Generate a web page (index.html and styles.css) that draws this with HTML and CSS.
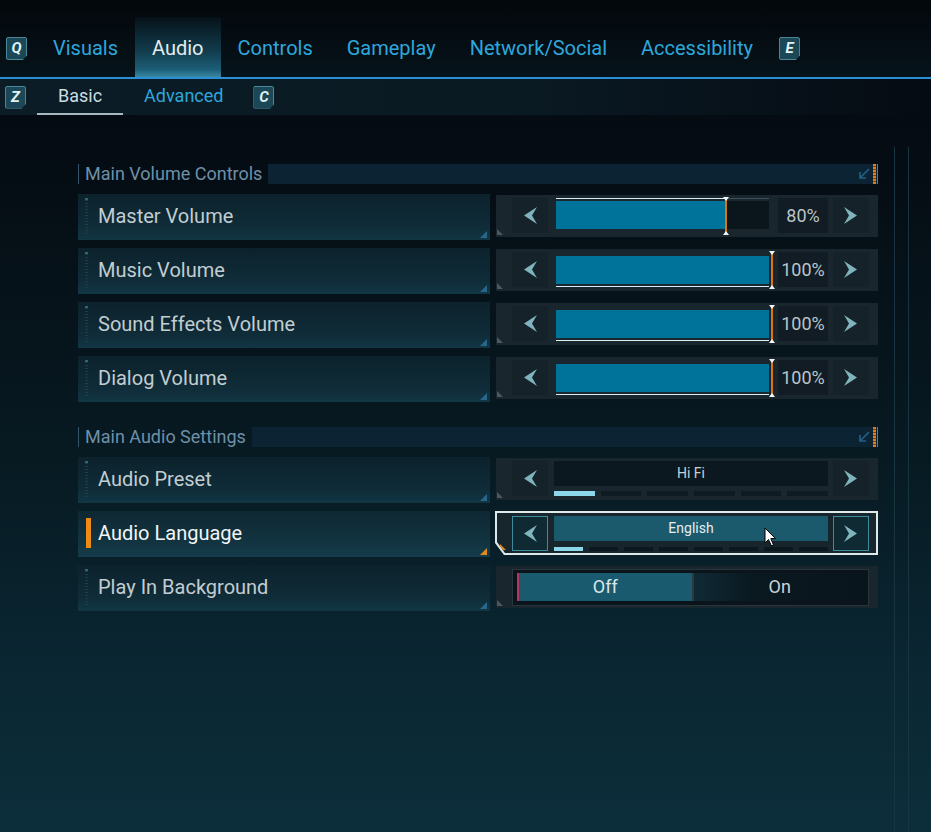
FILE: index.html
```html
<!DOCTYPE html>
<html lang="en">
  <head>
    <meta charset="UTF-8" />
    <title>Settings - Audio</title>
    <link rel="stylesheet" href="styles.css">
  </head>
  <body>
    <nav class="tabs">
      <span class="key key-left">Q</span>
      <a class="tab">Visuals</a>
      <a class="tab active">Audio</a>
      <a class="tab">Controls</a>
      <a class="tab">Gameplay</a>
      <a class="tab">Network/Social</a>
      <a class="tab">Accessibility</a>
      <span class="key key-right">E</span>
    </nav>

    <nav class="subtabs">
      <span class="key key-left">Z</span>
      <a class="subtab active">Basic</a>
      <a class="subtab">Advanced</a>
      <span class="key key-right">C</span>
    </nav>

    <main class="content">
      <div class="settings">
        <!-- Volume -->
        <section class="group">
          <div class="group-head">
            <span class="group-title">Main Volume Controls</span>
            <div class="group-bar">
              <svg class="collapse" width="12" height="12" viewBox="0 0 12 12"><path d="M11 1 L2 10 M2 4 L2 10 L8 10" fill="none" stroke="#2a6f9c" stroke-width="1.6"/></svg>
              <span class="stripe"></span>
              <span class="edge"></span>
            </div>
          </div>
          <div class="rows">
            <div class="row">
              <div class="label">Master Volume</div>
              <div class="control">
                <div class="control-body">
                  <button class="arrow"><svg width="14" height="17" viewBox="0 0 14 17"><polygon points="14,0 1,8.5 14,17 9,8.5"/></svg></button>
                  <div class="slider" style="--v:80%">
                    <div class="rail"></div>
                    <div class="track"><div class="fill"></div></div>
                    <span class="thumb"></span>
                  </div>
                  <div class="value">80%</div>
                  <button class="arrow"><svg width="14" height="17" viewBox="0 0 14 17"><polygon points="0,0 13,8.5 0,17 5,8.5"/></svg></button>
                </div>
              </div>
            </div>
            <div class="row">
              <div class="label">Music Volume</div>
              <div class="control">
                <div class="control-body">
                  <button class="arrow"><svg width="14" height="17" viewBox="0 0 14 17"><polygon points="14,0 1,8.5 14,17 9,8.5"/></svg></button>
                  <div class="slider full" style="--v:100%">
                    <div class="track"><div class="fill"></div></div>
                    <div class="rail"></div>
                    <span class="thumb"></span>
                  </div>
                  <div class="value">100%</div>
                  <button class="arrow"><svg width="14" height="17" viewBox="0 0 14 17"><polygon points="0,0 13,8.5 0,17 5,8.5"/></svg></button>
                </div>
              </div>
            </div>
            <div class="row">
              <div class="label">Sound Effects Volume</div>
              <div class="control">
                <div class="control-body">
                  <button class="arrow"><svg width="14" height="17" viewBox="0 0 14 17"><polygon points="14,0 1,8.5 14,17 9,8.5"/></svg></button>
                  <div class="slider full" style="--v:100%">
                    <div class="track"><div class="fill"></div></div>
                    <div class="rail"></div>
                    <span class="thumb"></span>
                  </div>
                  <div class="value">100%</div>
                  <button class="arrow"><svg width="14" height="17" viewBox="0 0 14 17"><polygon points="0,0 13,8.5 0,17 5,8.5"/></svg></button>
                </div>
              </div>
            </div>
            <div class="row">
              <div class="label">Dialog Volume</div>
              <div class="control">
                <div class="control-body">
                  <button class="arrow"><svg width="14" height="17" viewBox="0 0 14 17"><polygon points="14,0 1,8.5 14,17 9,8.5"/></svg></button>
                  <div class="slider full" style="--v:100%">
                    <div class="track"><div class="fill"></div></div>
                    <div class="rail"></div>
                    <span class="thumb"></span>
                  </div>
                  <div class="value">100%</div>
                  <button class="arrow"><svg width="14" height="17" viewBox="0 0 14 17"><polygon points="0,0 13,8.5 0,17 5,8.5"/></svg></button>
                </div>
              </div>
            </div>
          </div>
        </section>

        <!-- Audio settings -->
        <section class="group">
          <div class="group-head">
            <span class="group-title">Main Audio Settings</span>
            <div class="group-bar">
              <svg class="collapse" width="12" height="12" viewBox="0 0 12 12"><path d="M11 1 L2 10 M2 4 L2 10 L8 10" fill="none" stroke="#2a6f9c" stroke-width="1.6"/></svg>
              <span class="stripe"></span>
              <span class="edge"></span>
            </div>
          </div>
          <div class="rows">
            <div class="row">
              <div class="label">Audio Preset</div>
              <div class="control">
                <div class="control-body">
                  <button class="arrow"><svg width="14" height="17" viewBox="0 0 14 17"><polygon points="14,0 1,8.5 14,17 9,8.5"/></svg></button>
                  <div class="picker">
                    <div class="picker-value">Hi Fi</div>
                    <div class="steps">
                      <span class="on"></span><span></span><span></span><span></span><span></span><span></span>
                    </div>
                  </div>
                  <button class="arrow"><svg width="14" height="17" viewBox="0 0 14 17"><polygon points="0,0 13,8.5 0,17 5,8.5"/></svg></button>
                </div>
              </div>
            </div>
            <div class="row">
              <div class="label active">Audio Language</div>
              <div class="control focused">
                <div class="control-body">
                  <button class="arrow"><svg width="14" height="17" viewBox="0 0 14 17"><polygon points="14,0 1,8.5 14,17 9,8.5"/></svg></button>
                  <div class="picker">
                    <div class="picker-value">English</div>
                    <div class="steps">
                      <span class="on"></span><span></span><span></span><span></span><span></span><span></span><span></span><span></span>
                    </div>
                  </div>
                  <button class="arrow"><svg width="14" height="17" viewBox="0 0 14 17"><polygon points="0,0 13,8.5 0,17 5,8.5"/></svg></button>
                </div>
              </div>
            </div>
            <div class="row">
              <div class="label">Play In Background</div>
              <div class="control">
                <div class="control-body">
                  <div class="toggle">
                    <span class="opt on">Off</span>
                    <span class="opt">On</span>
                  </div>
                </div>
              </div>
            </div>
          </div>
        </section>
      </div>

      <div class="scroll"></div>
    </main>

    <svg class="cursor" width="13" height="20" viewBox="0 0 13 20"><path d="M1 1 L1 16 L4.5 12.5 L7.5 19 L9.5 18 L6.8 11.6 L11.5 11.6 Z" fill="#fff" stroke="#000" stroke-width="1"/></svg>
  </body>
</html>
```

FILE: styles.css
```css
* {
  margin: 0;
  padding: 0;
  box-sizing: border-box;
}

body {
  width: 931px;
  height: 832px;
  overflow: hidden;
  position: relative;
  font-family: Roboto, "Liberation Sans", sans-serif;
  color: #c7d2d6;
  background: linear-gradient(180deg, #04090f 0px, #050c13 150px, #071921 440px, #0a2733 680px, #0c2e3a 832px);
}

/* top tabs */
.tabs {
  height: 79px;
  display: flex;
  align-items: flex-end;
  padding-left: 6px;
  background: linear-gradient(180deg, #03070b 0%, #06131a 100%);
  border-bottom: 2px solid #2b8fd6;
}

.tab {
  height: 60px;
  line-height: 62px;
  padding: 0 17px;
  font-size: 20px;
  color: #2ea7dc;
}

.tab.active {
  color: #e4ecee;
  background: linear-gradient(180deg, rgba(12, 34, 44, 0.3) 0%, #113a4a 55%, #1c5f78 88%, #3a88a2 100%);
}

.key {
  width: 21px;
  height: 23px;
  line-height: 21px;
  text-align: center;
  font-size: 15px;
  font-weight: bold;
  font-style: italic;
  color: #dff3f7;
  background: #1b4756;
  border: 1px solid #4a8898;
  border-radius: 2px;
  clip-path: polygon(0 0, 100% 0, 100% 80%, 80% 100%, 0 100%);
}

.tabs .key {
  margin-bottom: 17px;
}

.tabs .key-left {
  margin-right: 9px;
}

.tabs .key-right {
  margin-left: 9px;
}

/* sub tabs */
.subtabs {
  height: 36px;
  display: flex;
  align-items: center;
  padding-left: 5px;
  background: linear-gradient(90deg, #0b1c26 0%, #0a1a23 55%, #050b13 100%);
}

.subtab {
  height: 36px;
  line-height: 34px;
  padding: 0 21px;
  font-size: 18px;
  color: #2ea7dc;
}

.subtab.active {
  color: #c9dde2;
  border-bottom: 2px solid #a9b8bf;
}

.subtabs .key-left {
  margin-right: 11px;
}

.subtabs .key-right {
  margin-left: 9px;
}

/* content */
.content {
  display: flex;
  padding-top: 49px;
}

.settings {
  margin-left: 78px;
  width: 800px;
}

.scroll {
  margin-left: 16px;
  margin-top: -17px;
  width: 15px;
  height: 685px;
  border-left: 1px solid #173440;
  border-right: 1px solid #173440;
}

.group + .group {
  margin-top: 25px;
}

.group-head {
  display: flex;
  height: 20px;
  border-left: 1px solid #35546a;
}

.group-title {
  padding: 0 6px;
  font-size: 18px;
  line-height: 20px;
  color: #6e90a8;
  white-space: nowrap;
}

.group-bar {
  flex: 1;
  display: flex;
  justify-content: flex-end;
  align-items: center;
  background: #0c2333;
}

.collapse {
  margin-right: 3px;
  opacity: 0.8;
}

.stripe {
  width: 3px;
  height: 20px;
  background: repeating-linear-gradient(180deg, #e27c1b 0 2px, #7a4312 2px 3px);
}

.edge {
  width: 1px;
  height: 20px;
  margin-left: 1px;
  background: #3a8ab0;
}

.rows {
  display: flex;
  flex-direction: column;
  gap: 8px;
  margin-top: 10px;
}

.row {
  display: flex;
  height: 46px;
  gap: 6px;
}

/* labels */
.label {
  position: relative;
  width: 412px;
  padding-left: 20px;
  font-size: 20px;
  line-height: 44px;
  color: #c2cdd1;
  background: linear-gradient(180deg, #0c222c 0%, #0f2c38 70%, #123644 100%);
}

.label::before {
  content: "";
  position: absolute;
  left: 7px;
  top: 4px;
  bottom: 6px;
  width: 3px;
  border-top: 2px solid #2d6677;
  background: repeating-linear-gradient(180deg, #1b3e4b 0 1px, transparent 1px 3px);
}

.label::after {
  content: "";
  position: absolute;
  right: 3px;
  bottom: 2px;
  width: 7px;
  height: 7px;
  background: #27678c;
  clip-path: polygon(100% 0, 100% 100%, 0 100%);
}

.label.active {
  color: #f2f6f7;
  background: linear-gradient(180deg, #0e2833 0%, #123441 70%, #153c4b 100%);
}

.label.active::before {
  top: 7px;
  bottom: auto;
  left: 8px;
  width: 5px;
  height: 30px;
  border-top: none;
  background: #ee8a16;
}

.label.active::after {
  background: #e08a1e;
}

/* controls */
.control {
  width: 382px;
  height: 42px;
  margin-top: 1px;
}

.control-body {
  position: relative;
  display: flex;
  height: 100%;
  padding: 3px 9px 4px 16px;
  background: #1a262e;
}

.control-body::before {
  content: "";
  position: absolute;
  left: 1px;
  bottom: 2px;
  width: 6px;
  height: 6px;
  background: #4a5860;
  clip-path: polygon(0 0, 100% 100%, 0 100%);
}

.control.focused {
  width: 383px;
  height: 44px;
  margin: 0 0 0 -1px;
  padding: 2px;
  background: #dfe8ea;
  clip-path: polygon(0 0, 100% 0, 100% 100%, 9px 100%, 0 calc(100% - 12px));
}

.focused .control-body {
  padding: 3px 7px 2px 15px;
  background: #17252d;
  clip-path: polygon(0 0, 100% 0, 100% 100%, 8px 100%, 0 calc(100% - 11px));
}

.focused .control-body::before {
  left: 3px;
  bottom: 3px;
  background: #e08a1e;
}

.arrow {
  width: 36px;
  height: 35px;
  padding: 0;
  border: none;
  background: #16222a;
  display: flex;
  align-items: center;
  justify-content: center;
}

.arrow svg {
  display: block;
  flex: none;
  fill: #7fb3bd;
}

.arrow + .slider {
  margin-left: 8px;
}

.value + .arrow,
.picker + .arrow {
  margin-left: 5px;
}

.focused .arrow {
  border: 1px solid #3b8c9c;
  background: #102a33;
}

/* slider */
.slider {
  position: relative;
  width: 213px;
  height: 35px;
  display: flex;
  flex-direction: column;
}

.rail {
  height: 1px;
  background: linear-gradient(90deg, #d9eef3 var(--v), #3f4f58 var(--v));
}

.track {
  height: 28px;
  margin-top: 2px;
  background: #0b151c;
}

.slider.full .track {
  margin-top: 4px;
}

.slider.full .rail {
  margin-top: 2px;
}

.fill {
  width: var(--v);
  height: 100%;
  background: #00739b;
}

.thumb {
  position: absolute;
  top: 0;
  bottom: -1px;
  left: var(--v);
  width: 2px;
  margin-left: -1px;
  background: #d9770f;
}

.slider.full .thumb {
  margin-left: 2px;
}

.thumb::before,
.thumb::after {
  content: "";
  position: absolute;
  left: -2px;
  border-left: 3px solid transparent;
  border-right: 3px solid transparent;
}

.thumb::before {
  top: -1px;
  border-top: 4px solid #f2f6f7;
}

.thumb::after {
  bottom: -1px;
  border-bottom: 4px solid #f2f6f7;
}

.value {
  width: 50px;
  margin-left: 9px;
  background: #111c24;
  text-align: center;
  font-size: 18px;
  line-height: 35px;
  color: #b9c5c9;
}

/* picker */
.picker {
  width: 274px;
  display: flex;
  flex-direction: column;
}

.arrow + .picker {
  margin-left: 6px;
}

.picker-value {
  height: 25px;
  line-height: 25px;
  text-align: center;
  font-size: 14px;
  color: #c4d0d4;
  background: #0b1820;
}

.steps {
  display: flex;
  gap: 6px;
  height: 5px;
  margin-top: 5px;
}

.steps span {
  flex: 1;
  background: #0e1b23;
}

.steps span.on {
  background: #8cd8ea;
}

.focused .picker-value {
  color: #e6eef0;
  background: #1b596c;
}

.focused .steps {
  height: 4px;
  margin-top: 6px;
}

.focused .steps span {
  background: #0c171e;
}

.focused .steps span.on {
  background: #8cd8ea;
}

/* toggle */
.toggle {
  width: 358px;
  height: 37px;
  display: flex;
  padding: 3px 2px 4px 4px;
  background: #0a141a;
  border: 1px solid #26353e;
}

.opt {
  flex: 1;
  text-align: center;
  font-size: 18px;
  line-height: 28px;
  color: #c8d3d6;
  border-left: 2px solid #2b3a42;
  background: linear-gradient(90deg, #0f2a34 0%, #0a1820 35%, #09151c 100%);
}

.opt.on {
  border-left: 2px solid #b8325a;
  background: #1a5a6e;
  color: #dbe6e9;
}

.cursor {
  position: absolute;
  left: 764px;
  top: 527px;
}
```
